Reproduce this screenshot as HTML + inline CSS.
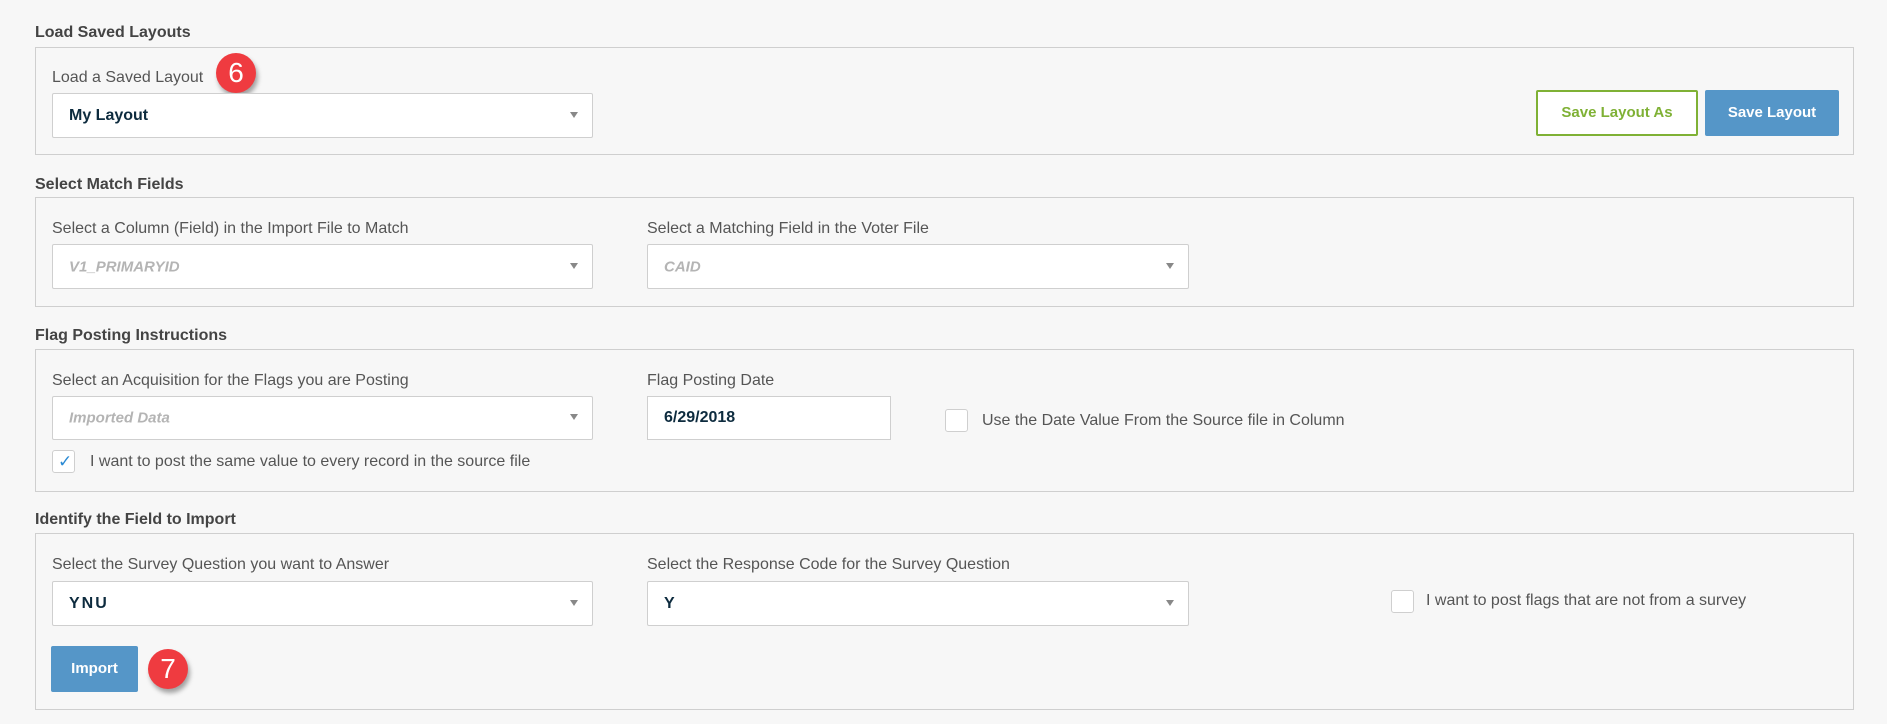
<!DOCTYPE html>
<html><head><meta charset="utf-8"><style>
*{box-sizing:border-box;margin:0;padding:0}
body{width:1887px;height:724px;background:#f7f7f7;font-family:"Liberation Sans",Arial,sans-serif;position:relative;overflow:hidden}
.a{position:absolute}
.t{font-weight:bold;font-size:16px;color:#444;transform:translateY(-50%)}
.p{border:1px solid #cfcfcf;background:#f7f7f7}
.l{font-size:16px;color:#555;transform:translateY(-50%);white-space:nowrap}
.s{background:#fff;border:1px solid #cfcfcf;border-radius:2px}
.s span{position:absolute;left:16px;top:50%;transform:translateY(-50%);font-size:16px;font-weight:bold;color:#0d2b3e}
.s span.ph{font-style:italic;color:#b4b4b4;font-weight:bold;font-size:15px}
.s:after{content:"";position:absolute;right:14px;top:50%;margin-top:-4px;border-left:4px solid transparent;border-right:4px solid transparent;border-top:6px solid #888}
.cb{background:#fff;border:1px solid #cfcfcf;border-radius:3px}
.badge{width:40px;height:40px;border-radius:50%;background:#ef3b40;color:#fff;font-size:28px;text-align:center;line-height:40px;box-shadow:2px 4px 5px rgba(0,0,0,.35)}
.btn{font-weight:bold;font-size:15px;text-align:center;border-radius:2px}
</style></head><body>
<div class="a t" style="left:35px;top:33px">Load Saved Layouts</div>
<div class="a p" style="left:35px;top:47px;width:1819px;height:108px"></div>
<div class="a l" style="left:52px;top:78px">Load a Saved Layout</div>
<div class="a badge" style="left:216px;top:53px">6</div>
<div class="a s" style="left:52px;top:93px;width:541px;height:45px"><span>My Layout</span></div>
<div class="a btn" style="left:1536px;top:90px;width:162px;height:46px;border:2px solid #7fb135;color:#7fb135;background:#fff;line-height:42px">Save Layout As</div>
<div class="a btn" style="left:1705px;top:90px;width:134px;height:46px;background:#5596c8;color:#fff;line-height:46px">Save Layout</div>

<div class="a t" style="left:35px;top:185px">Select Match Fields</div>
<div class="a p" style="left:35px;top:197px;width:1819px;height:110px"></div>
<div class="a l" style="left:52px;top:229px">Select a Column (Field) in the Import File to Match</div>
<div class="a l" style="left:647px;top:229px">Select a Matching Field in the Voter File</div>
<div class="a s" style="left:52px;top:244px;width:541px;height:45px"><span class="ph">V1_PRIMARYID</span></div>
<div class="a s" style="left:647px;top:244px;width:542px;height:45px"><span class="ph">CAID</span></div>

<div class="a t" style="left:35px;top:336px">Flag Posting Instructions</div>
<div class="a p" style="left:35px;top:349px;width:1819px;height:143px"></div>
<div class="a l" style="left:52px;top:381px">Select an Acquisition for the Flags you are Posting</div>
<div class="a l" style="left:647px;top:381px">Flag Posting Date</div>
<div class="a s" style="left:52px;top:396px;width:541px;height:44px"><span class="ph">Imported Data</span></div>
<div class="a" style="left:647px;top:396px;width:244px;height:44px;background:#fff;border:1px solid #cfcfcf"><span style="position:absolute;left:16px;top:50%;transform:translateY(-50%);font-size:16px;font-weight:bold;color:#0d2b3e">6/29/2018</span></div>
<div class="a cb" style="left:945px;top:409px;width:23px;height:23px"></div>
<div class="a l" style="left:982px;top:421px">Use the Date Value From the Source file in Column</div>
<div class="a cb" style="left:52px;top:450px;width:23px;height:23px"><span style="position:absolute;left:5px;top:1px;color:#2a8ad4;font-size:17px">✓</span></div>
<div class="a l" style="left:90px;top:462px">I want to post the same value to every record in the source file</div>

<div class="a t" style="left:35px;top:520px">Identify the Field to Import</div>
<div class="a p" style="left:35px;top:533px;width:1819px;height:177px"></div>
<div class="a l" style="left:52px;top:565px">Select the Survey Question you want to Answer</div>
<div class="a l" style="left:647px;top:565px">Select the Response Code for the Survey Question</div>
<div class="a s" style="left:52px;top:581px;width:541px;height:45px"><span style="letter-spacing:2px">YNU</span></div>
<div class="a s" style="left:647px;top:581px;width:542px;height:45px"><span>Y</span></div>
<div class="a cb" style="left:1391px;top:590px;width:23px;height:23px"></div>
<div class="a l" style="left:1426px;top:601px">I want to post flags that are not from a survey</div>
<div class="a btn" style="left:51px;top:646px;width:87px;height:46px;background:#5596c8;color:#fff;line-height:46px">Import</div>
<div class="a badge" style="left:148px;top:649px">7</div>
</body></html>
